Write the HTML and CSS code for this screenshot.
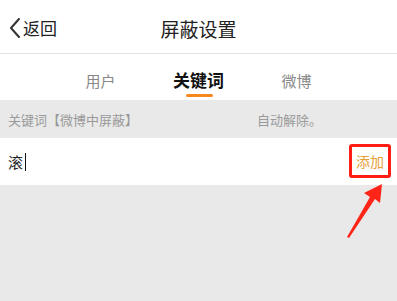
FILE: index.html
```html
<!DOCTYPE html>
<html lang="zh-CN">
<head>
    <meta charset="UTF-8">
    <meta name="viewport" content="width=device-width, initial-scale=1.0">
    <title>屏蔽设置</title>
    <link rel="stylesheet" href="styles.css">
</head>
<body>
    <div class="header">
        <div class="back">
            <svg class="back-icon" width="14" height="22" viewBox="0 0 14 22">
                <polyline points="11,2 3,11 11,20" fill="none" stroke="#333" stroke-width="2" stroke-linecap="round" stroke-linejoin="round"/>
            </svg>
            <span>返回</span>
        </div>
        <div class="title">屏蔽设置</div>
    </div>
    <div class="tabs">
        <div class="tab">用户</div>
        <div class="tab active">关键词</div>
        <div class="tab">微博</div>
    </div>
    <div class="hint">
        <span class="hint-left">关键词【微博中屏蔽】</span>
        <span class="hint-right">自动解除。</span>
    </div>
    <div class="input-row">
        <div class="input-text">滚<span class="cursor"></span></div>
        <button class="btn-add">添加</button>
    </div>
    <div class="rest"></div>
    <svg class="arrow" width="397" height="301" viewBox="0 0 397 301">
        <polygon points="347,237 370,197 364,193 382,184 380,203 375,199 349,238" fill="#ff2418"/>
    </svg>
</body>
</html>
```

FILE: styles.css
```css
body {
    margin: 0;
    padding: 0;
    width: 397px;
    height: 301px;
    overflow: hidden;
    background: #e9e9e9;
    font-family: "Noto Sans CJK SC", "Noto Sans", sans-serif;
    color: #222;
    position: relative;
}
.header {
    height: 53px;
    background: #fff;
    border-bottom: 1px solid #e3e3e3;
    position: relative;
    display: flex;
    align-items: center;
    justify-content: center;
}
.back {
    position: absolute;
    left: 8px;
    top: 17px;
    display: flex;
    align-items: center;
    font-size: 17px;
    line-height: 22px;
    color: #222;
}
.back-icon {
    margin-right: 1px;
}
.title {
    font-size: 19px;
    line-height: 24px;
    color: #222;
    margin-top: 4px;
}
.tabs {
    height: 46px;
    background: #fff;
    display: flex;
    justify-content: center;
}
.tab {
    width: 98px;
    text-align: center;
    font-size: 15px;
    line-height: 20px;
    padding-top: 17px;
    color: #888;
    position: relative;
}
.tab.active {
    font-size: 17px;
    font-weight: bold;
    color: #111;
    padding-top: 16px;
}
.tab.active::after {
    content: "";
    position: absolute;
    left: 36px;
    top: 40px;
    width: 27px;
    height: 3px;
    border-radius: 2px;
    background: #f7881d;
}
.hint {
    height: 38px;
    display: flex;
    align-items: center;
    font-size: 13px;
    color: #9a9a9a;
    padding-left: 8px;
}
.hint-left {
    width: 249px;
}
.input-row {
    height: 47px;
    background: #fff;
    display: flex;
    align-items: center;
    justify-content: space-between;
}
.input-text {
    margin-left: 8px;
    font-size: 15px;
    line-height: 20px;
    color: #222;
    display: flex;
    align-items: center;
}
.cursor {
    display: inline-block;
    width: 1px;
    height: 18px;
    background: #111;
    margin-left: 2px;
}
.btn-add {
    margin-right: 6px;
    padding: 0 4px;
    height: 34px;
    border: 3px solid #ff1c12;
    border-radius: 3px;
    background: #fff;
    color: #e6a034;
    font-family: "Noto Sans CJK SC", "Noto Sans", sans-serif;
    font-size: 14px;
    line-height: 20px;
    margin-top: -1px;
}
.arrow {
    position: absolute;
    left: 0;
    top: 0;
}
```
